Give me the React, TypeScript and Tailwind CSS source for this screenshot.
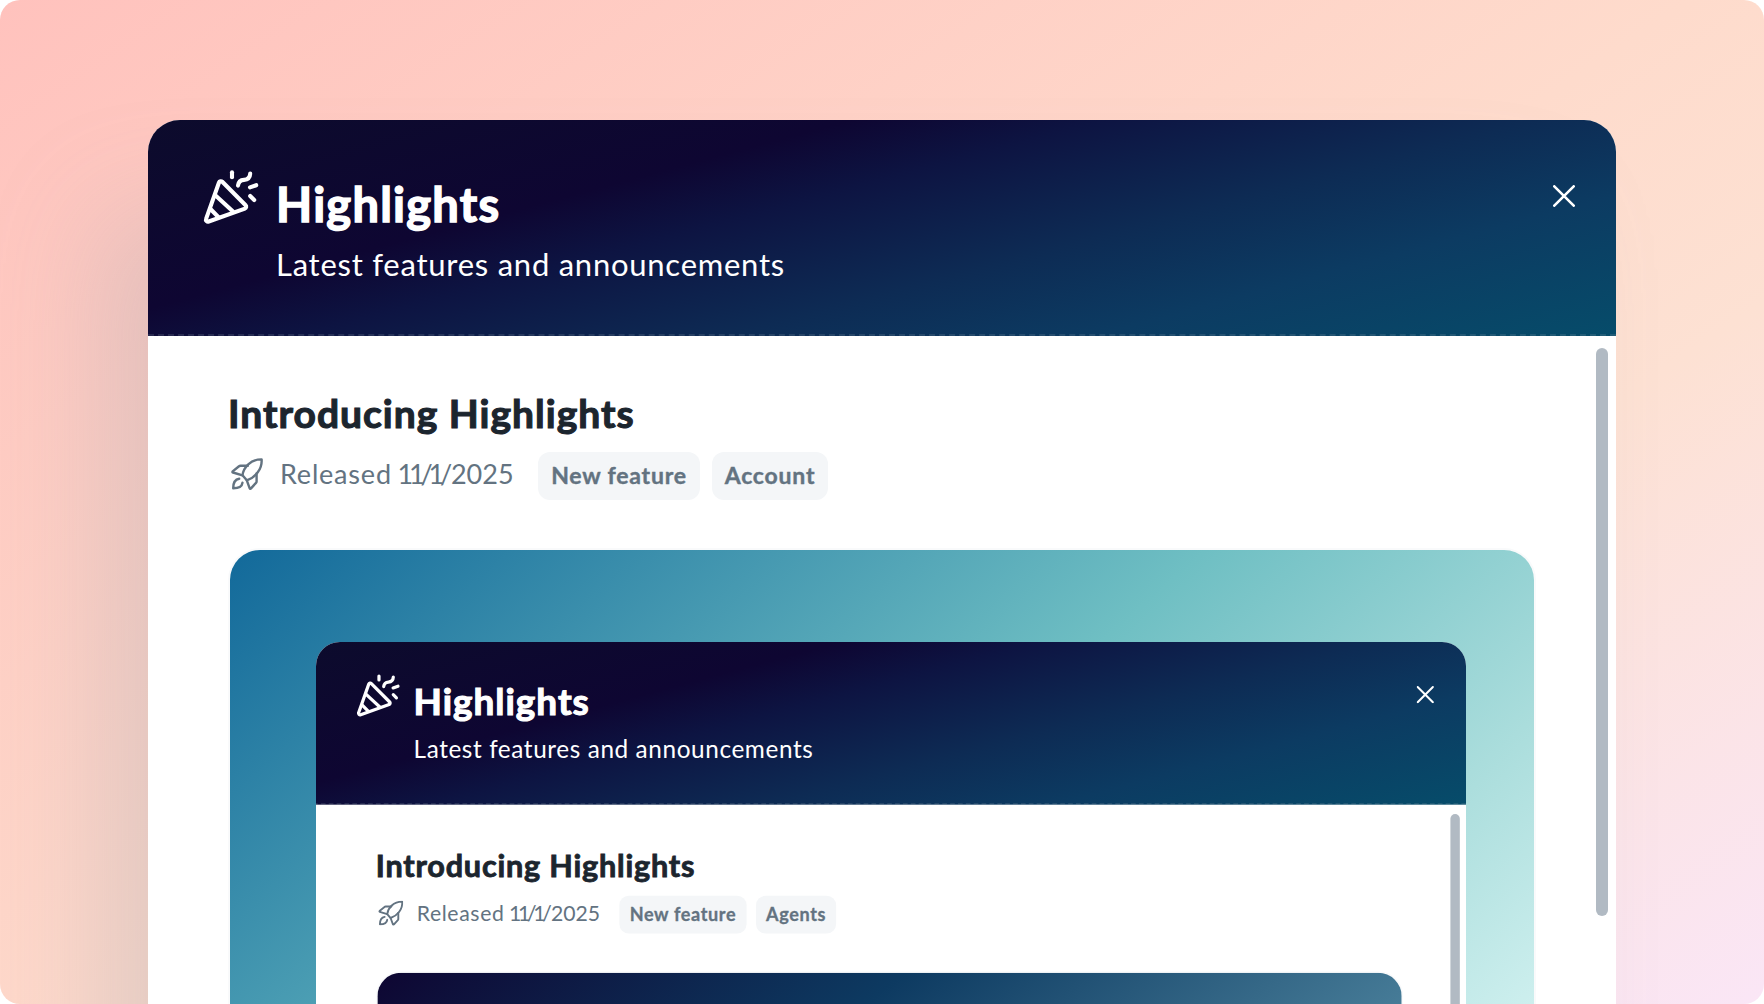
import React from "react";

function PartyPopper() {
  return (
    <svg
      viewBox="0 0 56 56"
      className="h-14 w-14 overflow-visible"
      fill="none"
      stroke="currentColor"
      strokeWidth="4.1"
      strokeLinecap="round"
      strokeLinejoin="round"
    >
      <path d="M20.300 13.800 43.600 37.300a2 2 0 0 1-.7 3.300L6.700 53.500A2 2 0 0 1 4.100 50.900L17 14.500a2 2 0 0 1 3.300-.7Z" />
      <path d="M13 27 31 43.600" />
      <path d="M8.700 41.200 16.500 49.200" />
      <path d="M30 4.200v5" />
      <path d="M36 17.600c.5-4 2.500-5.500 6-5.700 3.800-.3 6-2 6.200-6.300" />
      <path d="M48 19.400 54.200 17.200" />
      <path d="m48.200 28 4 4" />
    </svg>
  );
}

function Rocket() {
  return (
    <svg
      viewBox="0 0 32 32"
      className="h-8 w-8"
      fill="none"
      stroke="currentColor"
      strokeWidth="2.4"
      strokeLinecap="round"
      strokeLinejoin="round"
    >
      <path d="M11.500 17.300C12.500 9.500 19.500 1.300 30.600 1.400 31.400 11.500 24 19.500 15.800 22.300Z" />
      <path d="M16.800 7.700H9.500Q8.600 7.700 8 8.300L1.700 13.400Q1 14.200 2 14.500L11.500 17.300" />
      <path d="M25.600 15.500V23.500Q25.600 24.300 25 24.900L19.800 30.600Q19 31.200 18.700 30.300L15.800 22.300" />
      <path d="M8.200 20.800C3.500 21.500 2.200 25.500 2.200 30.300 6.500 30.300 11 29 11.500 24.600" />
    </svg>
  );
}

function Tag({ children }: { children: React.ReactNode }) {
  return (
    <span className="flex h-12 items-center justify-center rounded-xl bg-[#f4f6f8] pb-0.5 text-[23px] font-bold tracking-[0.8px] whitespace-nowrap text-[#637381] [-webkit-text-stroke:0.4px]">
      {children}
    </span>
  );
}

function Panel({
  tag,
  tagWidth,
  children,
}: {
  tag: string;
  tagWidth: string;
  children: React.ReactNode;
}) {
  return (
    <div className="flex h-[884px] w-[1468px] flex-col bg-white">
      <header className="flex h-[216px] shrink-0 items-start border-b-2 border-dashed border-[#919eab]/20 bg-[linear-gradient(165deg,#0c0b2c_0%,#0e0632_31%,#0d1442_42%,#0d2b54_61%,#0c3b62_77%,#064c6a_100%)] bg-origin-border pl-[54px] text-white">
        <div className="mt-12 w-[74px] shrink-0">
          <PartyPopper />
        </div>
        <div className="grow">
          <h1 className="mt-[54px] text-[47px] leading-[60px] font-bold tracking-[1.25px] [-webkit-text-stroke:1.4px]">
            Highlights
          </h1>
          <p className="mt-2.5 text-[31px] leading-10 tracking-[0.75px]">
            Latest features and announcements
          </p>
        </div>
        <svg
          viewBox="0 0 22 22"
          className="mt-[65px] mr-[41px] h-[22px] w-[22px] shrink-0"
          fill="none"
          stroke="currentColor"
          strokeWidth="2.600"
          strokeLinecap="round"
        >
          <path d="M1.300 1.300 20.700 20.700M20.700 1.300 1.300 20.700" />
        </svg>
      </header>
      <div className="flex min-h-0 grow">
        <main className="flex w-[1448px] shrink-0 flex-col pr-[60px] pl-20">
          <h2 className="mt-[51px] text-[39px] leading-[52px] font-bold tracking-[1px] text-[#1c252e] [-webkit-text-stroke:1.1px]">
            Introducing Highlights
          </h2>
          <div className="mt-[13px] flex h-12 items-center text-[#637381]">
            <div className="ml-[3px] w-[49px] pb-1">
              <Rocket />
            </div>
            <p className="w-[258px] pb-1 text-[27px] leading-10 tracking-[0.8px] whitespace-nowrap">
              Released{" "}
              <span className="ml-[-2px] tracking-[-4.2px]">11/1/</span>
              <span className="ml-[3px] tracking-[0px]">2025</span>
            </p>
            <div className="flex gap-3">
              <div className="w-[162px]">
                <Tag>New feature</Tag>
              </div>
              <div className={tagWidth}>
                <Tag>{tag}</Tag>
              </div>
            </div>
          </div>
          <div className="mt-12 min-h-0 grow overflow-hidden rounded-t-[32px] border-x-2 border-t-2 border-[#f9fafb]">
            {children}
          </div>
        </main>
        <div className="mt-3 h-[568px] w-3 rounded-full bg-[#b1bac3]" />
      </div>
    </div>
  );
}

export default function App() {
  return (
    <div className="h-[1004px] w-[1764px] overflow-hidden bg-white font-['Lato',sans-serif]">
      <div className="h-full overflow-hidden rounded-[20px] bg-[linear-gradient(146deg,#ffc2bd_0%,#fedbcc_52%,#fde1d3_68%,#fae6f6_100%)] pt-[120px] pl-[148px]">
        <div className="h-[1200px] w-[1468px] rounded-t-[32px] shadow-[-60px_80px_110px_-12px_rgba(145,158,171,0.26)]">
          <div className="overflow-hidden rounded-t-[32px]">
            <Panel tag="Account" tagWidth="w-[116px]">
              <div className="h-full bg-[linear-gradient(139deg,#12699a_0%,#6fbfc3_53.5%,#aadddc_82%,#cdefee_100%)] pt-[92px] pl-[86px]">
                <div className="h-[362px] w-[1150px] overflow-hidden rounded-t-[24px] bg-white">
                  <div className="-mt-[7px] -ml-[3px] origin-top-left scale-[0.7855]">
                    <Panel tag="Agents" tagWidth="w-[102px]">
                      <div className="h-full bg-[linear-gradient(141deg,#0e0632_0%,#0d3a61_36%,#4a809b_75%)]" />
                    </Panel>
                  </div>
                </div>
              </div>
            </Panel>
          </div>
        </div>
      </div>
    </div>
  );
}
